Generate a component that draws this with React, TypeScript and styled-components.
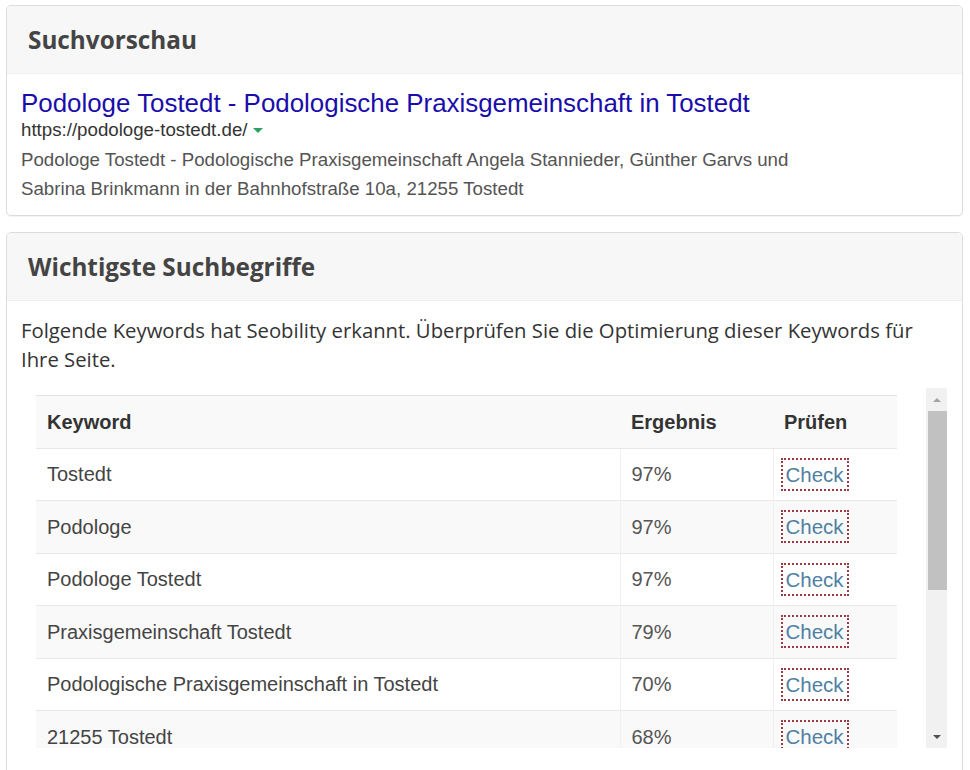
import React from "react";
import styled, { createGlobalStyle } from "styled-components";

const Global = createGlobalStyle`
  html, body { margin: 0; padding: 0; background: #fff; }
  body { padding: 5px 7px 0 6px; font-family: "Open Sans", "Liberation Sans", sans-serif; color: #333; }
`;

const Page = styled.div`
  display: flex;
  flex-direction: column;
  gap: 16px;
  width: 957px;
`;

const Panel = styled.section`
  border: 1px solid #dcdcdc;
  border-radius: 5px;
  background: #fff;
  box-shadow: 0 1px 1px rgba(0, 0, 0, 0.05);
  overflow: hidden;
`;

const PanelHeading = styled.div`
  height: 67px;
  display: flex;
  align-items: center;
  padding: 0 21px;
  background: #f7f7f7;
  border-bottom: 1px solid #f0f0f0;
`;

const PanelTitle = styled.h3`
  margin: 0;
  font-family: "Open Sans", sans-serif;
  font-weight: 700;
  font-size: 24.3px;
  color: #444;
`;

const PanelBody = styled.div<{ $pt?: number; $pb?: number }>`
  padding: ${(p) => p.$pt ?? 14}px 14px ${(p) => p.$pb ?? 12}px 14px;
`;

const SerpTitle = styled.a`
  display: block;
  font-family: "Liberation Sans", Arial, sans-serif;
  font-size: 25.9px;
  line-height: 30px;
  color: #1a0dab;
  text-decoration: none;
`;

const SerpUrl = styled.div`
  display: flex;
  align-items: center;
  gap: 5px;
  font-family: "Liberation Sans", Arial, sans-serif;
  font-size: 18.7px;
  line-height: 24px;
  color: #333;
`;

const Caret = styled.span`
  width: 0;
  height: 0;
  border-left: 5px solid transparent;
  border-right: 5px solid transparent;
  border-top: 5px solid #2f9e62;
  margin-top: 1px;
`;

const SerpDesc = styled.p`
  margin: 2.5px 0 0;
  font-family: "Liberation Sans", Arial, sans-serif;
  font-size: 18.7px;
  line-height: 29px;
  color: #545454;
  max-width: 800px;
`;

const Intro = styled.p`
  margin: 0 0 14.5px;
  font-size: 20.3px;
  line-height: 29px;
  color: #333;
`;

const TableFrame = styled.div`
  display: flex;
  gap: 29px;
  height: 360px;
  margin: 0 1px 0 15px;
`;

const Viewport = styled.div`
  flex: 1;
  min-width: 0;
  padding-top: 7px;
  overflow: hidden;
`;

const Rail = styled.div`
  width: 21px;
  display: flex;
  flex-direction: column;
  background: #f1f1f1;
`;

const RailButton = styled.div`
  height: 23px;
  display: flex;
  align-items: center;
  justify-content: center;
`;

const Arrow = styled.span<{ $dir: "up" | "down" }>`
  width: 0;
  height: 0;
  border-left: 4px solid transparent;
  border-right: 4px solid transparent;
  ${(p) =>
    p.$dir === "up"
      ? "border-bottom: 4px solid #a3a3a3;"
      : "border-top: 4px solid #505050;"}
`;

const Thumb = styled.div`
  height: 179px;
  margin: 0 0 0 2px;
  background: #c1c1c1;
`;

const RailSpace = styled.div`
  flex: 1;
`;

const Table = styled.table`
  width: 100%;
  border-collapse: collapse;
  font-family: "Liberation Sans", Arial, sans-serif;
  font-size: 20px;
  color: #333;
`;

const Th = styled.th<{ $w?: number }>`
  text-align: left;
  font-weight: 700;
  padding: 11.5px 11px;
  line-height: 28.5px;
  background: #f9f9f9;
  border-top: 1px solid #e3e3e3;
  width: ${(p) => (p.$w ? `${p.$w}px` : "auto")};
`;

const Row = styled.tr<{ $striped: boolean }>`
  background: ${(p) => (p.$striped ? "#f9f9f9" : "#fff")};
`;

const Td = styled.td<{ $divider?: boolean; $muted?: boolean }>`
  padding: 11.5px 11px;
  line-height: 28.5px;
  border-top: 1px solid #e8e8e8;
  border-left: ${(p) => (p.$divider ? "1px solid #f0f0f0" : "none")};
  color: ${(p) => (p.$muted ? "#555" : "#444")};
  white-space: nowrap;
`;

const CheckButton = styled.a`
  display: inline-block;
  margin: -2.5px 0 -2.5px -4px;
  padding: 0 3px;
  font-size: 20.5px;
  line-height: 29px;
  border: 2px dotted #9c3a44;
  color: #4f7fa3;
  text-decoration: none;
  vertical-align: top;
`;

const keywords: [string, string][] = [
  ["Tostedt", "97%"],
  ["Podologe", "97%"],
  ["Podologe Tostedt", "97%"],
  ["Praxisgemeinschaft Tostedt", "79%"],
  ["Podologische Praxisgemeinschaft in Tostedt", "70%"],
  ["21255 Tostedt", "68%"],
];

export default function App() {
  return (
    <>
      <Global />
      <Page>
        <Panel>
          <PanelHeading>
            <PanelTitle>Suchvorschau</PanelTitle>
          </PanelHeading>
          <PanelBody>
            <SerpTitle>Podologe Tostedt - Podologische Praxisgemeinschaft in Tostedt</SerpTitle>
            <SerpUrl>
              https://podologe-tostedt.de/
              <Caret />
            </SerpUrl>
            <SerpDesc>
              Podologe Tostedt - Podologische Praxisgemeinschaft Angela Stannieder, Günther Garvs und
              Sabrina Brinkmann in der Bahnhofstraße 10a, 21255 Tostedt
            </SerpDesc>
          </PanelBody>
        </Panel>
        <Panel>
          <PanelHeading>
            <PanelTitle>Wichtigste Suchbegriffe</PanelTitle>
          </PanelHeading>
          <PanelBody $pt={15} $pb={30}>
            <Intro>
              Folgende Keywords hat Seobility erkannt. Überprüfen Sie die Optimierung dieser Keywords für
              Ihre Seite.
            </Intro>
            <TableFrame>
              <Viewport>
                <Table>
                  <thead>
                    <tr>
                      <Th>Keyword</Th>
                      <Th $w={131}>Ergebnis</Th>
                      <Th $w={102}>Prüfen</Th>
                    </tr>
                  </thead>
                  <tbody>
                    {keywords.map(([k, v], i) => (
                      <Row key={k} $striped={i % 2 === 1}>
                        <Td>{k}</Td>
                        <Td $divider $muted>{v}</Td>
                        <Td $divider>
                          <CheckButton>Check</CheckButton>
                        </Td>
                      </Row>
                    ))}
                  </tbody>
                </Table>
              </Viewport>
              <Rail>
                <RailButton>
                  <Arrow $dir="up" />
                </RailButton>
                <Thumb />
                <RailSpace />
                <RailButton>
                  <Arrow $dir="down" />
                </RailButton>
              </Rail>
            </TableFrame>
          </PanelBody>
        </Panel>
      </Page>
    </>
  );
}
